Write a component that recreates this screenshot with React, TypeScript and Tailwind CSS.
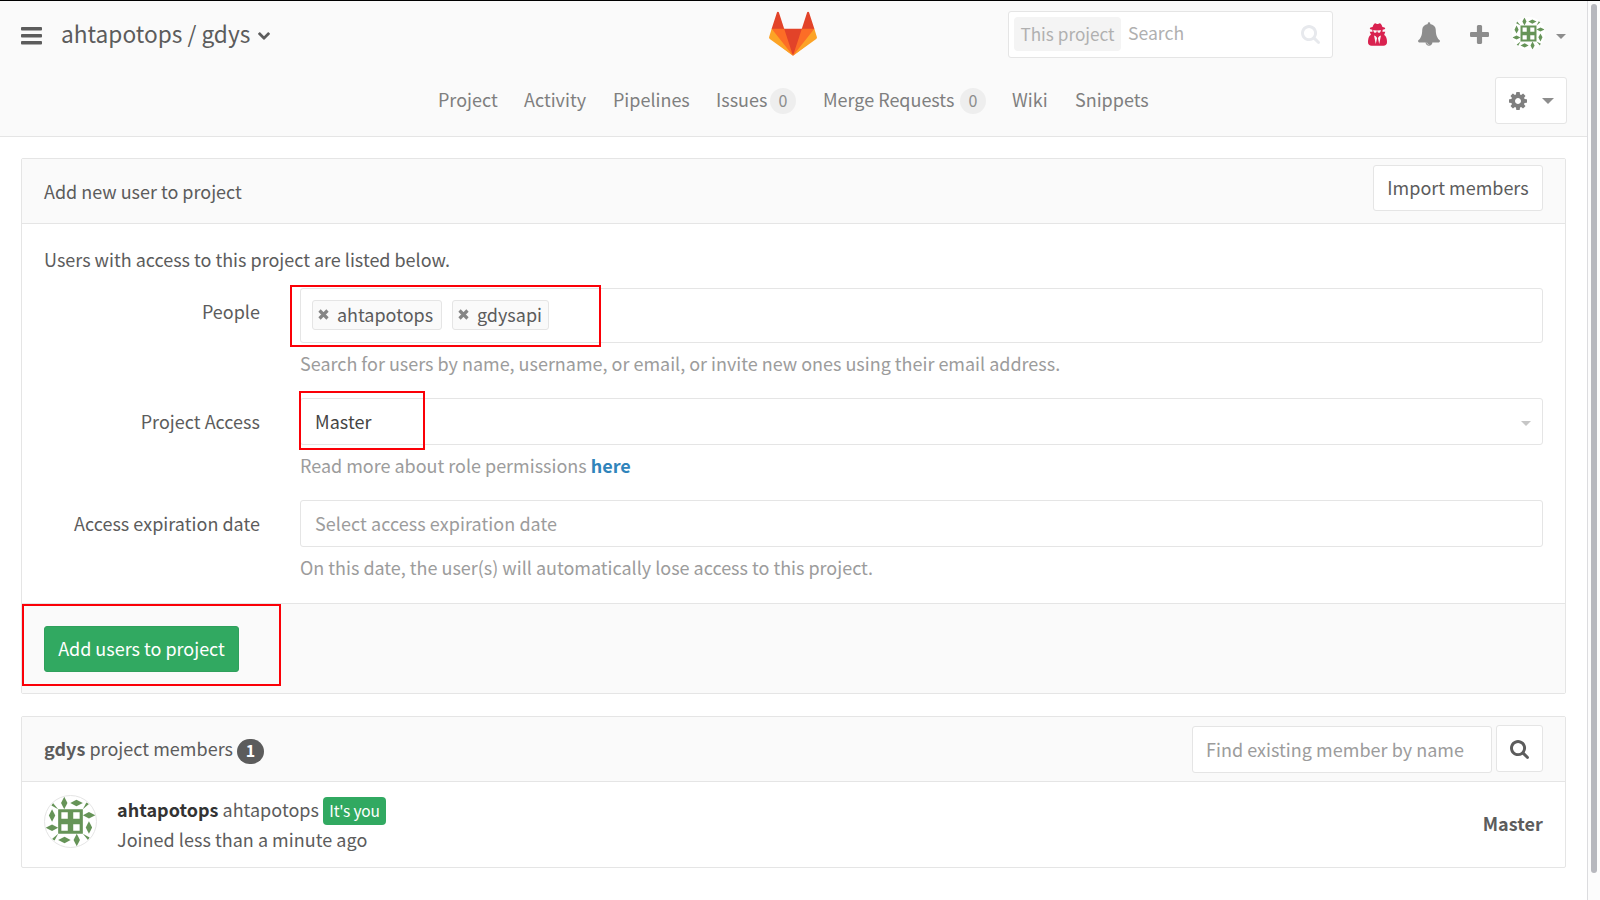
import type { ReactNode } from "react";

const PATHS = {
  bell: "M912 1696q0-16-16-16-59 0-101.500-42.500t-42.500-101.500q0-16-16-16t-16 16q0 73 51.500 124.500t124.500 51.500q16 0 16-16zM1728 1408q0 52-38 90t-90 38h-448q0 106-75 181t-181 75-181-75-75-181h-448q-52 0-90-38t-38-90q50-42 91-88t85-119.500 74.500-158.500 50-206 19.500-260q0-152 117-282.500t307-158.500q-8-19-8-39 0-40 28-68t68-28 68 28 28 68q0 20-8 39 190 28 307 158.500t117 282.500q0 139 19.500 260t50 206 74.500 158.500 85 119.500 91 88z",
  cog: "M1152 896q0-106-75-181t-181-75-181 75-75 181 75 181 181 75 181-75 75-181zM1664 787v222q0 12-8 23t-20 13l-185 28q-19 54-39 91 35 50 107 138 10 12 10 25t-9 23q-27 37-99 108t-94 71q-12 0-26-9l-138-108q-44 23-91 38-16 136-29 186-7 28-36 28h-222q-14 0-24.500-8.500t-11.500-21.500l-28-184q-49-16-90-37l-141 107q-10 9-25 9-14 0-25-11-126-114-165-168-7-10-7-23 0-12 8-23 15-21 51-66.500t54-70.500q-27-50-41-99l-183-27q-13-2-21-12.500t-8-23.500v-222q0-12 8-23t19-13l186-28q14-46 39-92-40-57-107-138-10-12-10-24 0-10 9-23 26-36 98.500-107.500t94.500-71.500q13 0 26 10l138 107q44-23 91-38 16-136 29-186 7-28 36-28h222q14 0 24.500 8.500t11.500 21.500l28 184q49 16 90 37l142-107q9-9 24-9 13 0 25 10 129 119 165 170 7 8 7 22 0 12-8 23-15 21-51 66.500t-54 70.500q26 50 41 98l183 28q13 2 21 12.500t8 23.500z",
  search: "M1216 832q0-185-131.500-316.500t-316.500-131.500-316.500 131.500-131.500 316.500 131.500 316.500 316.500 131.500 316.500-131.500 131.500-316.500zM1728 1664q0 52-38 90t-90 38q-54 0-90-38l-343-342q-179 124-399 124-143 0-273.500-55.500t-225-150-150-225-55.500-273.500 55.500-273.500 150-225 225-150 273.500-55.500 273.500 55.500 225 150 150 225 55.500 273.500q0 220-124 399l343 343q37 37 37 90z",
  plus: "M1600 736v192q0 40-28 68t-68 28h-416v416q0 40-28 68t-68 28h-192q-40 0-68-28t-28-68v-416h-416q-40 0-68-28t-28-68v-192q0-40 28-68t68-28h416v-416q0-40 28-68t68-28h192q40 0 68 28t28 68v416h416q40 0 68 28t28 68z",
  chevron: "M1683 808l-742 741q-19 19-45 19t-45-19l-742-741q-19-19-19-45.500t19-45.500l166-165q19-19 45-19t45 19l531 531 531-531q19-19 45-19t45 19l166 165q19 19 19 45.500t-19 45.500z",
  spy: "M704 1536l96-448-96-128-128-64zM960 1536l128-640-128 64-96 128zM1088 526q-2-4-4-6-10-8-96-8-70 0-167 19-7 2-21 2t-21-2q-97-19-167-19-86 0-96 8-2 2-4 6 2 18 4 27 2 3 7.500 6.500t7.500 10.500q2 4 7.500 20.500t7 20.500 7.500 17 8.500 17 9 14 12 13.500 14 9.500 17.500 8 20.500 4 24.500 2q36 0 59-12.500t32.500-30 14.500-34.500 11.500-29.500 17.500-12.500h12q11 0 17.500 12.500t11.500 29.500 14.500 34.500 32.500 30 59 12.500q13 0 24.500-2t20.500-4 17.500-8 14-9.500 12-13.500 9-14 8.500-17 7.500-17 7-20.500 7.500-20.500q2-7 7.500-10.500t7.500-6.500q2-9 4-27zM1536 1397q0 121-73 190t-194 69h-874q-121 0-194-69t-73-190q0-61 4.500-118t19-125.500 37.500-123.500 63.500-103.500 93.500-74.500l-90-220h214q-22-64-22-128 0-12 2-32-194-40-194-96 0-57 210-99 17-62 51.500-134t70.500-114q32-37 76-37 30 0 84 31t84 31 84-31 84-31q44 0 76 37 36 42 70.500 114t51.500 134q210 42 210 99 0 56-194 96 7 81-20 160h214l-82 225q63 33 107.500 96.500t65.500 143.500 29 151.500 8 157.500z",
};

function Icon({ d, box, className }: { d: string; box: string; className: string }) {
  return (
    <svg viewBox={box} className={`shrink-0 ${className}`} fill="currentColor" fillRule="evenodd">
      <path d={d} />
    </svg>
  );
}

function Bars() {
  return (
    <svg viewBox="0 0 21 18" className="mt-[3px] h-[18px] w-[21px] shrink-0" fill="currentColor">
      <rect y="0" width="21" height="3.5" rx="0.9" />
      <rect y="7" width="21" height="3.5" rx="0.9" />
      <rect y="14" width="21" height="3.5" rx="0.9" />
    </svg>
  );
}

function Logo() {
  return (
    <svg viewBox="0 0 36 36" className="-ml-px h-12 w-12">
      <path fill="#e24329" d="M2 14l9.38 9v-9l-4-12.28c-.205-.632-1.176-.632-1.38 0z" />
      <path fill="#e24329" d="M34 14l-9.38 9v-9l4-12.28c.205-.632 1.176-.632 1.38 0z" />
      <path fill="#e24329" d="M18 34.38L3 14h30z" />
      <path fill="#fc6d26" d="M18 34.38L11.38 14H2l4 11z" />
      <path fill="#fc6d26" d="M18 34.38L24.62 14H34l-4 11z" />
      <path fill="#fca326" d="M2 14L.1 20.16c-.18.565 0 1.2.5 1.56l17.42 12.66z" />
      <path fill="#fca326" d="M34 14l1.9 6.16c.18.565 0 1.2-.5 1.56L18 34.38z" />
    </svg>
  );
}

const QUARTERS = [0, 90, 180, 270];

function Identicon({ className }: { className: string }) {
  return (
    <svg viewBox="0 0 159 159" className={`shrink-0 rounded-full bg-white ${className}`}>
      <g fill="#669458">
        <path
          fillRule="evenodd"
          d="M41 41h77v77h-77zM51 51v20h20v-20zM88 51v20h20v-20zM51 88v20h20v-20zM88 88v20h20v-20z"
        />
        {QUARTERS.map((a) => (
          <g key={a} transform={`rotate(${a} 79.5 79.5)`}>
            <path d="M60 2l10 20-10 19-10-19z" />
            <path d="M79 22l19-10 20 10-20 10z" />
            <path d="M41 41L20 30 25 22z" />
          </g>
        ))}
      </g>
    </svg>
  );
}

function Caret({ className }: { className: string }) {
  return (
    <svg viewBox="0 0 10 5" preserveAspectRatio="none" className={`shrink-0 ${className}`} fill="currentColor">
      <path d="M0 0h10L5 5z" />
    </svg>
  );
}

function NavItem({ label, count, className }: { label: string; count?: number; className: string }) {
  return (
    <a className={`flex h-[26px] items-center justify-between ${className}`}>
      <span className="pb-[3px] leading-[23px]">{label}</span>
      {count !== undefined && (
        <span className="flex h-[26px] w-[26px] items-center justify-center rounded-full bg-[#eeeeee] pb-px text-[16px] leading-[25px] text-[#8c8c8c]">
          {count}
        </span>
      )}
    </a>
  );
}

function Tag({ name, className }: { name: string; className: string }) {
  return (
    <span
      className={`flex h-[30px] items-center rounded-[3px] border border-[#e5e5e5] bg-[#fafafa] pl-[5px] text-[#5c5c5c] ${className}`}
    >
      <svg viewBox="0 0 11 11" className="mr-2 h-[11px] w-[11px]" stroke="#858585" strokeWidth="3.2">
        <path d="M1.5 1.5l8 8M9.500 1.500l-8 8" />
      </svg>
      <span className="pb-[2px] leading-[26px]">{name}</span>
    </span>
  );
}

function Highlight({ className }: { className: string }) {
  return <div className={`pointer-events-none absolute border-2 border-[#fb0007] ${className}`} />;
}

function Row({ label, help, className, children }: { label: string; help: ReactNode; className: string; children: ReactNode }) {
  return (
    <div className={`flex ${className}`}>
      <label className="w-[216px] shrink-0 pt-2 text-right leading-[30px] tracking-[0.03px]">{label}</label>
      <div className="ml-10 w-[1243px]">
        {children}
        <p className="mt-[5px] mb-[3px] leading-[30px] text-[#9c9c9c]">{help}</p>
      </div>
    </div>
  );
}

export default function App() {
  return (
    <div className="flex h-[900px] w-[1600px] overflow-hidden border-t border-black bg-white font-['Noto_Sans_CJK_SC','Source_Sans_Pro',sans-serif] text-[17.98px] whitespace-nowrap text-[#5c5c5c]">
      <div className="w-[1587px]">
        <header className="h-[136px] border-b border-[#e5e5e5] bg-[#fafafa]">
          <div className="grid h-[66px] grid-cols-[1fr_48px_1fr] items-center pr-[21px] pl-[21px]">
            <div className="flex items-center">
              <Bars />
              <h1 className="ml-[19px] text-[22.7px] leading-8">ahtapotops / gdys</h1>
              <Icon d={PATHS.chevron} box="90 533 1612 1035" className="mt-[3px] ml-2 h-2 w-3" />
            </div>
            <Logo />
            <div className="flex items-center justify-end">
              <div className="flex h-[47px] w-[325px] items-center rounded-[3px] border border-[#e5e5e5] bg-white pr-3 pl-[5px] text-[#b0b0b0]">
                <span className="flex h-[34px] w-[107px] items-center justify-center rounded-sm bg-[#f4f4f4] text-[17.2px]">This project</span>
                <span className="ml-[7px] grow pb-px text-[17.6px]">Search</span>
                <Icon d={PATHS.search} box="64 128 1664 1664" className="h-[19px] w-[19px] text-[#e7e9ed]" />
              </div>
              <Icon d={PATHS.spy} box="128 0 1408 1656" className="ml-[35px] h-[23px] w-[19px] text-[#d9224f]" />
              <Icon d={PATHS.bell} box="64 0 1664 1792" className="ml-[31px] h-6 w-[22px] text-[#8d8d8d]" />
              <Icon d={PATHS.plus} box="192 128 1408 1408" className="ml-[30px] h-[19px] w-[19px] text-[#8d8d8d]" />
              <Identicon className="mb-px ml-[23px] h-[33px] w-[33px]" />
              <Caret className="mt-[5px] ml-[11px] h-[5px] w-[10px] text-[#8d8d8d]" />
            </div>
          </div>
          <div className="flex h-[67px] items-center pl-[438px] text-[#7f7f7f]">
            <NavItem label="Project" className="w-[86px]" />
            <NavItem label="Activity" className="w-[89px]" />
            <NavItem label="Pipelines" className="w-[103px]" />
            <NavItem label="Issues" count={0} className="w-[80px]" />
            <NavItem label="Merge Requests" count={0} className="ml-[27px] w-[163px]" />
            <NavItem label="Wiki" className="ml-[26px] w-[63px]" />
            <NavItem label="Snippets" className="w-[80px]" />
            <div className="mr-5 ml-auto flex h-[47px] w-[72px] items-center rounded-[3px] border border-[#e5e5e5] bg-white pl-[13px]">
              <Icon d={PATHS.cog} box="128 128 1536 1536" className="h-[18px] w-[18px]" />
              <Caret className="ml-[15px] h-[6px] w-3 text-[#8d8d8d]" />
            </div>
          </div>
        </header>

        <section className="relative mt-[21px] ml-[21px] h-[536px] w-[1545px] rounded-[2px] border border-[#e5e5e5]">
          <div className="flex h-[65px] justify-between border-b border-[#e5e5e5] bg-[#fafafa] pr-[22px] pl-[22px]">
            <h2 className="pt-[17px] leading-[30px]">Add new user to project</h2>
            <button className="mt-[6px] h-[46px] w-[170px] rounded-[3px] border border-[#e5e5e5] bg-white pb-px">Import members</button>
          </div>
          <div className="h-[380px] border-b border-[#e5e5e5] pl-[22px]">
            <p className="pt-5 leading-[30px]">Users with access to this project are listed below.</p>
            <Row
              label="People"
              className="mt-[14px]"
              help="Search for users by name, username, or email, or invite new ones using their email address."
            >
              <div className="flex h-[55px] items-center gap-[10px] rounded-[3px] border border-[#e5e5e5] pb-[2px] pl-[11px]">
                <Tag name="ahtapotops" className="w-[130px]" />
                <Tag name="gdysapi" className="w-[97px]" />
              </div>
            </Row>
            <Row
              label="Project Access"
              className="mt-[17px]"
              help={
                <>
                  Read more about role permissions <a className="font-bold text-[#3084bb]">here</a>
                </>
              }
            >
              <div className="flex h-[47px] items-center justify-between rounded-[3px] border border-[#e5e5e5] pr-[11px] pl-[14px] tracking-[0.07px] text-[#444444]">
                Master
                <Caret className="mt-[3px] h-[5px] w-[10px] text-[#c6c6c6]" />
              </div>
            </Row>
            <Row
              label="Access expiration date"
              className="mt-[17px]"
              help="On this date, the user(s) will automatically lose access to this project."
            >
              <div className="flex h-[47px] items-center rounded-[3px] border border-[#e5e5e5] pl-[14px] tracking-[0.07px] text-[#9c9c9c]">
                Select access expiration date
              </div>
            </Row>
          </div>
          <div className="h-[89px] bg-[#fafafa] pt-[22px] pl-[22px]">
            <button className="h-[46px] w-[195px] rounded-[3px] border border-[#2fa05c] bg-[#31a961] pb-[2px] text-white">Add users to project</button>
          </div>
          <Highlight className="top-[126px] left-[268px] h-[62px] w-[311px]" />
          <Highlight className="top-[232px] left-[277px] h-[59px] w-[126px]" />
          <Highlight className="top-[445px] left-0 h-[82px] w-[259px]" />
        </section>

        <section className="mt-[22px] ml-[21px] h-[152px] w-[1545px] rounded-[2px] border border-[#e5e5e5]">
          <div className="flex h-[65px] border-b border-[#e5e5e5] bg-[#fafafa] pr-[22px] pl-[22px]">
            <h2 className="pt-4 leading-[30px] tracking-[0.04px]">
              <b>gdys</b> project members
            </h2>
            <span className="mt-[22px] ml-1 flex h-[25px] w-[27px] items-center justify-center rounded-full bg-[#5c5c5c] pb-[3px] text-[16px] font-bold text-white">
              1
            </span>
            <div className="mt-[9px] ml-auto flex h-[47px] w-[300px] items-center rounded-[3px] border border-[#e5e5e5] bg-white pl-[13px] tracking-[0.04px] text-[#9c9c9c]">
              Find existing member by name
            </div>
            <button className="mt-2 ml-1 flex h-[47px] w-[47px] items-center justify-center rounded-[3px] border border-[#e5e5e5] bg-white">
              <Icon d={PATHS.search} box="64 128 1664 1664" className="mt-px h-[19px] w-[19px]" />
            </button>
          </div>
          <div className="flex h-[85px] items-start pt-[13px] pr-[22px] pl-[22px]">
            <Identicon className="h-[53px] w-[53px] border border-[#e5e5e5]" />
            <div className="-mt-px ml-5 grow tracking-[0.04px]">
              <div className="flex h-[30px] items-center">
                <b className="text-[#333333]">ahtapotops</b>
                <span className="ml-1">ahtapotops</span>
                <span className="mt-[3px] ml-1 flex h-7 w-[63px] items-center justify-center rounded-[4px] bg-[#31a961] text-[15.5px] tracking-[-0.2px] text-white">It's you</span>
              </div>
              <div className="leading-[30px]">Joined less than a minute ago</div>
            </div>
            <b className="mt-[13px] leading-[30px] tracking-[0.07px]">Master</b>
          </div>
        </section>
      </div>
      <aside className="w-[13px] border-l border-[#dcdcdf] bg-[#fcfcfc] pt-[3px] pl-[3px]">
        <div className="h-[869px] w-[6px] rounded-full bg-[#b7b8be]" />
      </aside>
    </div>
  );
}
